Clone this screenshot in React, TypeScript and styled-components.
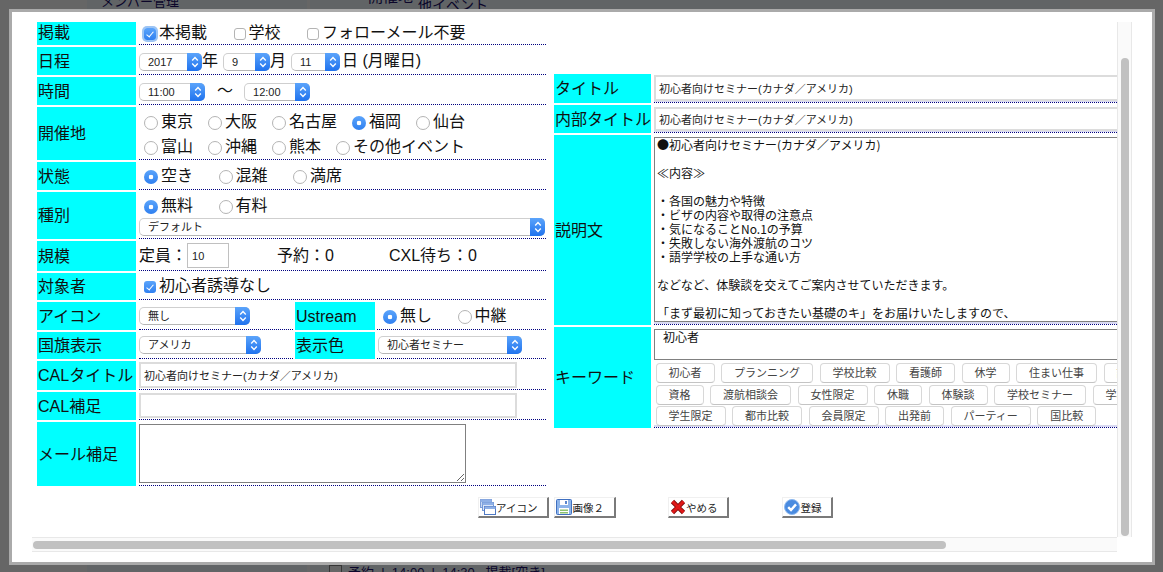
import React, { ReactElement } from "react";
import styled, { createGlobalStyle } from "styled-components";

const FONT = `"Liberation Sans", "Noto Sans CJK JP", sans-serif`;

const GlobalStyle = createGlobalStyle`
  html, body {
    margin: 0;
    height: 100%;
    overflow: hidden;
    background: #fff;
    font-family: ${FONT};
  }
`;

const Page = styled.div`
  display: flex;
  height: 572px;
  padding-left: 87px;
  box-sizing: border-box;
  overflow: hidden;
`;

const SideColumn = styled.div`
  width: 220px;
  background: #f2f9ff;
  padding-left: 14px;
  box-sizing: border-box;
  font-size: 13px;
  line-height: 16px;
  color: #20106a;
  margin-right: 3px;
`;

const SideTitle = styled.div`
  margin-top: -6px;
`;

const MainColumn = styled.div`
  width: 760px;
  background: #f2f9ff;
  display: flex;
  flex-direction: column;
  justify-content: space-between;
  color: #20106a;
`;

const PageHead = styled.div`
  display: flex;
  gap: 5px;
  padding-left: 58px;
  margin-top: -13px;
  font-size: 15px;
  line-height: 20px;
`;

const PageHeadSub = styled.span`
  margin-top: 8px;
  font-size: 14px;
`;

const PageFoot = styled.div`
  display: flex;
  align-items: flex-start;
  gap: 6px;
  height: 7px;
  padding-left: 19px;
  font-size: 13px;
  line-height: 16px;
  white-space: pre;
`;

const PageFootIcon = styled.span`
  width: 13px;
  height: 12px;
  border: 1px solid #888;
  box-sizing: border-box;
  background: #fff;
`;

const Overlay = styled.div`
  position: fixed;
  inset: 0;
  background: rgba(0, 0, 0, 0.6);
`;

const Dialog = styled.div`
  position: fixed;
  left: 9px;
  top: 9px;
  width: 1146px;
  height: 556px;
  box-sizing: border-box;
  border: 3px solid #aaa;
  background: #fff;
  padding: 10px 0 0 20px;
`;

const ScrollFrame = styled.div`
  display: grid;
  grid-template-columns: 1085px 15px;
  grid-template-rows: 515px 15px;
`;

const Viewport = styled.div`
  overflow: hidden;
`;

const TrackV = styled.div`
  box-sizing: border-box;
  padding: 36px 3px 0 3px;
  background: #fafafa;
  border-left: 1px solid #e8e8e8;
  border-right: 1px solid #e8e8e8;
`;

const ThumbV = styled.div`
  width: 8px;
  height: 478px;
  border-radius: 4px;
  background: #c1c1c1;
`;

const TrackH = styled.div`
  box-sizing: border-box;
  padding: 3px 0 0 1px;
  background: #fafafa;
  border-top: 1px solid #e8e8e8;
  border-bottom: 1px solid #e8e8e8;
`;

const ThumbH = styled.div`
  width: 913px;
  height: 8px;
  border-radius: 4px;
  background: #c1c1c1;
`;

const Content = styled.div`
  width: max-content;
  padding-left: 5px;
`;

const Tables = styled.div`
  display: flex;
  align-items: center;
  gap: 8px;
`;

const Table = styled.div<{ $w: number; $mb?: number }>`
  width: ${(p) => p.$w}px;
  margin-bottom: ${(p) => p.$mb ?? 0}px;
  display: flex;
  flex-direction: column;
  gap: 2px;
`;

const Row = styled.div<{ $h: number }>`
  display: flex;
  height: ${(p) => p.$h}px;
`;

const Label = styled.div<{ $w?: number; $ml?: number; $latin?: boolean; $pb?: number }>`
  flex: none;
  width: ${(p) => p.$w ?? 99}px;
  margin-left: ${(p) => p.$ml ?? 0}px;
  padding-left: 1px;
  padding-bottom: ${(p) => p.$pb ?? (p.$latin ? 0 : 3)}px;
  padding-top: ${(p) => (p.$latin ? 2 : 0)}px;
  box-sizing: border-box;
  display: flex;
  align-items: center;
  background: #00ffff;
  color: #111;
  font-size: 16px;
  white-space: nowrap;
`;

const Value = styled.div<{ $w?: number; $ml?: number; $top?: boolean; $dense?: boolean }>`
  ${(p) => (p.$w ? `width: ${p.$w}px; flex: none;` : "flex: 1; min-width: 0;")}
  margin-left: ${(p) => p.$ml ?? 3}px;
  box-sizing: border-box;
  display: flex;
  align-items: ${(p) => (p.$top ? "flex-start" : "center")};
  border-bottom: 1px dotted #000080;
  box-shadow: ${(p) => (p.$dense ? "inset 0 -2px 0 #d9d9f2" : "none")};
  color: #111;
  font-size: 16px;
  line-height: 22px;
  white-space: nowrap;
`;

const Stack = styled(Value)`
  flex-direction: column;
  align-items: flex-start;
`;

const ChoiceLine = styled.div<{ $gap: number; $h?: number; $pt?: number; $pl?: number }>`
  display: flex;
  align-items: center;
  gap: ${(p) => p.$gap}px;
  height: ${(p) => p.$h ?? 25}px;
  margin-top: ${(p) => p.$pt ?? 0}px;
  padding-left: ${(p) => p.$pl ?? 5}px;
`;

const Choice = styled.label`
  display: inline-flex;
  align-items: center;
  gap: 3px;
`;

const Check = styled.input.attrs({ type: "checkbox" })<{ $ring?: boolean }>`
  appearance: none;
  position: relative;
  width: 12px;
  height: 12px;
  margin: 2px 0 0;
  box-sizing: border-box;
  border: 1px solid #b4b4b4;
  border-radius: 3px;
  background: #fff;
  box-shadow: ${(p) => (p.$ring ? "0 0 0 2px #9cc4f4" : "none")};

  &:checked {
    border: 0;
    background: linear-gradient(#5ba4fb, #2f80f0);
  }
  &:checked::before {
    content: "";
    position: absolute;
    left: 4px;
    top: 2px;
    width: 3px;
    height: 6px;
    border: solid #fff;
    border-width: 0 1.5px 1.5px 0;
    transform: rotate(40deg);
  }
`;

const Radio = styled.input.attrs({ type: "radio" })`
  appearance: none;
  width: 14px;
  height: 14px;
  margin: 2px 0 0;
  box-sizing: border-box;
  border: 1px solid #b4b4b4;
  border-radius: 50%;
  background: #fff;

  &:checked {
    border: 0;
    background: radial-gradient(circle, #fff 0 2px, transparent 2.6px),
      linear-gradient(#5ba4fb, #2f80f0);
  }
`;

const SelectBox = styled.span<{ $w: number; $ml?: number; $mt?: number }>`
  position: relative;
  display: inline-flex;
  flex: none;
  width: ${(p) => p.$w}px;
  height: 18px;
  margin-left: ${(p) => p.$ml ?? 0}px;
  margin-top: ${(p) => p.$mt ?? 0}px;
`;

const NativeSelect = styled.select`
  appearance: none;
  width: 100%;
  height: 100%;
  box-sizing: border-box;
  padding: 0 16px 0 8px;
  border: 1px solid #cfcfcf;
  border-bottom-color: #b5b5b5;
  border-radius: 5px;
  background: #fff;
  color: #222;
  font-family: ${FONT};
  font-size: 11px;
`;

const Stepper = styled.span`
  position: absolute;
  top: 0;
  right: 0;
  bottom: 0;
  width: 15px;
  display: flex;
  align-items: center;
  justify-content: center;
  border-radius: 0 5px 5px 0;
  background: linear-gradient(#5ba4fb, #1f72ee);
  pointer-events: none;
`;

const Unit = styled.span<{ $mr?: number; $ml?: number }>`
  margin-right: ${(p) => p.$mr ?? 0}px;
  margin-left: ${(p) => p.$ml ?? 0}px;
`;

const Tilde = styled.span`
  margin: 0 11px 0 12px;
`;

const TextField = styled.input.attrs({ type: "text" })<{ $w: number; $h: number; $mt?: number; $thin?: boolean }>`
  width: ${(p) => p.$w}px;
  height: ${(p) => p.$h}px;
  margin: ${(p) => p.$mt ?? 0}px 0 0;
  box-sizing: border-box;
  padding: 0 ${(p) => (p.$thin ? 4 : 3)}px;
  border: ${(p) => (p.$thin ? "1px solid #c0c0c0" : "2px solid #dcdcdc")};
  background: #fff;
  color: #222;
  font-family: ${FONT};
  font-size: 11px;
  outline: none;
`;

const MemoField = styled.textarea<{ $w: number; $h: number; $pl?: number; $fixed?: boolean }>`
  width: ${(p) => p.$w}px;
  height: ${(p) => p.$h}px;
  margin: 2px 0 0;
  box-sizing: border-box;
  padding: 0 0 0 ${(p) => p.$pl ?? 2}px;
  border: 1px solid #808080;
  background: #fff;
  color: #111;
  font-family: "Noto Sans CJK JP", sans-serif;
  font-size: 12px;
  line-height: 14px;
  outline: none;
  overflow: hidden;
  resize: ${(p) => (p.$fixed ? "none" : "both")};
`;

const Stat = styled.span<{ $ml: number }>`
  margin-left: ${(p) => p.$ml}px;
`;

const PillRows = styled.div`
  display: flex;
  flex-direction: column;
  gap: 1.5px;
  margin-top: 3px;
  padding-left: 1.5px;
`;

const PillRow = styled.div`
  display: flex;
  gap: 6.5px;
`;

const Pill = styled.button`
  flex: none;
  height: 20px;
  padding: 0 12px;
  border: 1px solid #d8d8d8;
  border-bottom-color: #c4c4c4;
  border-radius: 4px;
  background: #fff;
  color: #444;
  font-family: ${FONT};
  font-size: 11px;
  line-height: 16px;
`;

const ButtonBar = styled.div`
  display: flex;
  margin-top: 11px;
  padding-left: 441px;
  padding-bottom: 20px;
`;

const ActionButton = styled.button<{ $ml?: number }>`
  display: inline-flex;
  align-items: center;
  height: 21px;
  margin-left: ${(p) => p.$ml ?? 0}px;
  padding: 0 10px 0 1px;
  box-sizing: border-box;
  border-style: solid;
  border-width: 1px 2px 2px 1px;
  border-color: #f0f0f0 #7a7a7a #7a7a7a #f0f0f0;
  background: #fff;
  color: #222;
  font-family: ${FONT};
  font-size: 10.5px;
  white-space: nowrap;
`;

const StepperIcon = () => (
  <svg width="8" height="12" viewBox="0 0 8 12" fill="none" stroke="#fff" strokeWidth="1.4">
    <path d="M1.2 4.4 4 1.6l2.8 2.8" />
    <path d="M1.2 7.6 4 10.4l2.8-2.8" />
  </svg>
);

const WindowsIcon = () => (
  <svg width="16" height="16" viewBox="0 0 16 16">
    <rect x="0.5" y="0.5" width="11" height="8" fill="#c9d9f3" stroke="#7f9fd8" />
    <rect x="0.5" y="0.5" width="11" height="2.5" fill="#8fb0e6" />
    <rect x="2.5" y="3.5" width="11" height="8" fill="#dbe6f8" stroke="#7398d6" />
    <rect x="2.5" y="3.5" width="11" height="2.5" fill="#8fb0e6" />
    <rect x="4.5" y="7.5" width="11" height="8" fill="#fff" stroke="#4f79c4" />
    <rect x="4.5" y="7.5" width="11" height="2.5" fill="#8fb0e6" />
  </svg>
);

const FloppyIcon = () => (
  <svg width="16" height="16" viewBox="0 0 16 16">
    <rect x="0.5" y="0.5" width="15" height="15" rx="1" fill="#8db4ea" stroke="#3f6fc0" />
    <rect x="4" y="1" width="8" height="5" fill="#fff" />
    <rect x="9" y="2" width="2" height="3" fill="#5b86cc" />
    <rect x="3" y="9" width="10" height="6" fill="#fff" />
    <rect x="4" y="10.5" width="8" height="1.5" fill="#8cc26f" />
    <rect x="4" y="13" width="8" height="1.5" fill="#8cc26f" />
  </svg>
);

const CrossIcon = () => (
  <svg width="16" height="16" viewBox="0 0 16 16">
    <path d="M2.5 2.5 13.5 13.5M13.5 2.5 2.5 13.5" stroke="#7d0b0b" strokeWidth="4.6" />
    <path d="M2.5 2.5 13.5 13.5M13.5 2.5 2.5 13.5" stroke="#e01818" strokeWidth="3" />
  </svg>
);

const CheckIcon = () => (
  <svg width="16" height="16" viewBox="0 0 16 16">
    <circle cx="8" cy="8" r="7.5" fill="#4a8be0" stroke="#8db8ee" />
    <path d="M4.2 8.2 7 11l5-5.6" fill="none" stroke="#fff" strokeWidth="2.4" />
  </svg>
);

type SelectProps = { value: string; w: number; ml?: number; mt?: number };

const Select = ({ value, w, ml, mt }: SelectProps): ReactElement => (
  <SelectBox $w={w} $ml={ml} $mt={mt}>
    <NativeSelect defaultValue={value}>
      <option>{value}</option>
    </NativeSelect>
    <Stepper>
      <StepperIcon />
    </Stepper>
  </SelectBox>
);

const DESCRIPTION = `●初心者向けセミナー(カナダ／アメリカ)

≪内容≫

・各国の魅力や特徴
・ビザの内容や取得の注意点
・気になることNo.1の予算
・失敗しない海外渡航のコツ
・語学学校の上手な通い方

などなど、体験談を交えてご案内させていただきます。

「まず最初に知っておきたい基礎のキ」をお届けいたしますので、`;

const KEYWORDS = [
  ["初心者", "プランニング", "学校比較", "看護師", "休学", "住まい仕事", "語学"],
  ["資格", "渡航相談会", "女性限定", "休職", "体験談", "学校セミナー", "学校"],
  ["学生限定", "都市比較", "会員限定", "出発前", "パーティー", "国比較"],
];

const CITIES = [
  ["東京", "大阪", "名古屋", "福岡", "仙台"],
  ["富山", "沖縄", "熊本", "その他イベント"],
];

const TITLE = "初心者向けセミナー(カナダ／アメリカ)";

const App = (): ReactElement => (
  <>
    <GlobalStyle />
    <Page>
      <SideColumn>
        <SideTitle>メンバー管理</SideTitle>
      </SideColumn>
      <MainColumn>
        <PageHead>
          <span>開催地</span>
          <PageHeadSub>他イベント</PageHeadSub>
        </PageHead>
        <PageFoot>
          <PageFootIcon />
          <span>予約  |  14:00  |  14:30   掲載[空き]</span>
        </PageFoot>
      </MainColumn>
    </Page>
    <Overlay />
    <Dialog>
      <ScrollFrame>
        <Viewport>
          <Content>
            <Tables>
              <Table $w={509}>
                <Row $h={23}>
                  <Label $pb={6}>掲載</Label>
                  <Value>
                    <ChoiceLine $gap={26.5} $h={21}>
                      <Choice><Check defaultChecked $ring />本掲載</Choice>
                      <Choice><Check />学校</Choice>
                      <Choice><Check />フォローメール不要</Choice>
                    </ChoiceLine>
                  </Value>
                </Row>
                <Row $h={28}>
                  <Label>日程</Label>
                  <Value>
                    <Select value="2017" w={63} mt={3} />
                    <Unit $mr={5}>年</Unit>
                    <Select value="9" w={47} mt={3} />
                    <Unit $mr={5}>月</Unit>
                    <Select value="11" w={49} mt={3} />
                    <Unit $ml={2}>日 (月曜日)</Unit>
                  </Value>
                </Row>
                <Row $h={28}>
                  <Label>時間</Label>
                  <Value>
                    <Select value="11:00" w={66} mt={3} />
                    <Tilde>〜</Tilde>
                    <Select value="12:00" w={66} mt={3} />
                  </Value>
                </Row>
                <Row $h={53}>
                  <Label>開催地</Label>
                  <Stack>
                    {CITIES.map((line, i) => (
                      <ChoiceLine key={i} $gap={15} $pt={i === 0 ? 3 : 0}>
                        {line.map((city) => (
                          <Choice key={city}>
                            <Radio name="city" defaultChecked={city === "福岡"} />
                            {city}
                          </Choice>
                        ))}
                      </ChoiceLine>
                    ))}
                  </Stack>
                </Row>
                <Row $h={28}>
                  <Label>状態</Label>
                  <Value>
                    <ChoiceLine $gap={25.5}>
                      <Choice><Radio name="status" defaultChecked />空き</Choice>
                      <Choice><Radio name="status" />混雑</Choice>
                      <Choice><Radio name="status" />満席</Choice>
                    </ChoiceLine>
                  </Value>
                </Row>
                <Row $h={47}>
                  <Label>種別</Label>
                  <Stack>
                    <ChoiceLine $gap={25.5} $h={24} $pt={2}>
                      <Choice><Radio name="kind" defaultChecked />無料</Choice>
                      <Choice><Radio name="kind" />有料</Choice>
                    </ChoiceLine>
                    <Select value="デフォルト" w={406} />
                  </Stack>
                </Row>
                <Row $h={30}>
                  <Label>規模</Label>
                  <Value>
                    <span>定員：</span>
                    <TextField $w={42} $h={25} $thin defaultValue="10" />
                    <Stat $ml={48}>予約：0</Stat>
                    <Stat $ml={55}>CXL待ち：0</Stat>
                  </Value>
                </Row>
                <Row $h={27}>
                  <Label>対象者</Label>
                  <Value>
                    <ChoiceLine $gap={26}>
                      <Choice><Check defaultChecked />初心者誘導なし</Choice>
                    </ChoiceLine>
                  </Value>
                </Row>
                <Row $h={28}>
                  <Label>アイコン</Label>
                  <Value $w={154}>
                    <Select value="無し" w={111} />
                  </Value>
                  <Label $w={80} $ml={2} $latin>Ustream</Label>
                  <Value $ml={2}>
                    <ChoiceLine $gap={25.5} $pl={6}>
                      <Choice><Radio name="ustream" defaultChecked />無し</Choice>
                      <Choice><Radio name="ustream" />中継</Choice>
                    </ChoiceLine>
                  </Value>
                </Row>
                <Row $h={27}>
                  <Label>国旗表示</Label>
                  <Value $w={154}>
                    <Select value="アメリカ" w={122} />
                  </Value>
                  <Label $w={80} $ml={2}>表示色</Label>
                  <Value $ml={2}>
                    <Select value="初心者セミナー" w={144} ml={1} />
                  </Value>
                </Row>
                <Row $h={29}>
                  <Label>CALタイトル</Label>
                  <Value $top>
                    <TextField $w={378} $h={26} $mt={1} defaultValue={TITLE} />
                  </Value>
                </Row>
                <Row $h={28}>
                  <Label>CAL補足</Label>
                  <Value $top>
                    <TextField $w={378} $h={25} $mt={1} />
                  </Value>
                </Row>
                <Row $h={64}>
                  <Label>メール補足</Label>
                  <Value $top>
                    <MemoField $w={327} $h={59} />
                  </Value>
                </Row>
              </Table>
              <Table $w={767} $mb={6}>
                <Row $h={29}>
                  <Label $w={97}>タイトル</Label>
                  <Value $top $dense>
                    <TextField $w={667} $h={26} $mt={1} defaultValue={TITLE} />
                  </Value>
                </Row>
                <Row $h={28}>
                  <Label $w={97}>内部タイトル</Label>
                  <Value $top $dense>
                    <TextField $w={667} $h={24} $mt={2} defaultValue={TITLE} />
                  </Value>
                </Row>
                <Row $h={190}>
                  <Label $w={97}>説明文</Label>
                  <Value $top $dense>
                    <MemoField $w={667} $h={185} $fixed defaultValue={DESCRIPTION} />
                  </Value>
                </Row>
                <Row $h={101}>
                  <Label $w={97}>キーワード</Label>
                  <Stack $dense>
                    <MemoField $w={667} $h={31} $pl={8} $fixed defaultValue="初心者" />
                    <PillRows>
                      {KEYWORDS.map((line, i) => (
                        <PillRow key={i}>
                          {line.map((word) => (
                            <Pill key={word}>{word}</Pill>
                          ))}
                        </PillRow>
                      ))}
                    </PillRows>
                  </Stack>
                </Row>
              </Table>
            </Tables>
            <ButtonBar>
              <ActionButton><WindowsIcon />アイコン</ActionButton>
              <ActionButton $ml={5}><FloppyIcon />画像２</ActionButton>
              <ActionButton $ml={52}><CrossIcon />やめる</ActionButton>
              <ActionButton $ml={53}><CheckIcon />登録</ActionButton>
            </ButtonBar>
          </Content>
        </Viewport>
        <TrackV>
          <ThumbV />
        </TrackV>
        <TrackH>
          <ThumbH />
        </TrackH>
      </ScrollFrame>
    </Dialog>
  </>
);

export default App;
